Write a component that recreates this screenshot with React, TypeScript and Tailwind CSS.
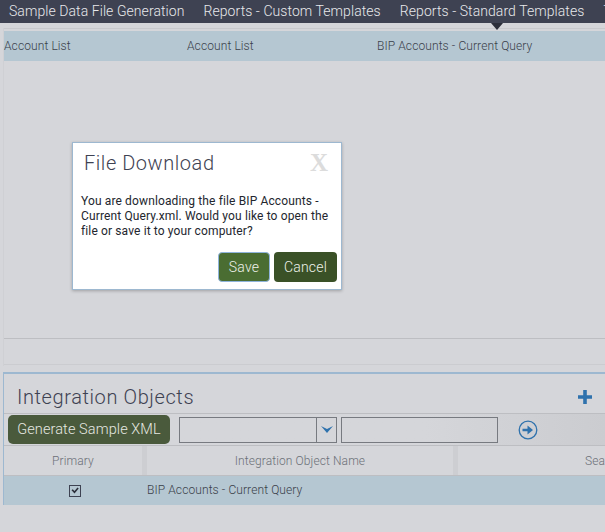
import { FC } from 'react'

const tabs = ['Sample Data File Generation', 'Reports - Custom Templates', 'Reports - Standard Templates', 'Test']

const App: FC = () => {
	return (
		<div className="relative h-[532px] w-[605px] overflow-hidden bg-[#d5d6da] font-['Roboto',sans-serif] font-light text-[#30343f]">
			<div className="relative flex h-[23px] items-center gap-[19px] overflow-hidden whitespace-nowrap bg-[#3e4252] pl-[9px] text-[14px] tracking-[0.07px] text-[#e8e9ec]">
				{tabs.map((tab) => (
					<span key={tab} className="shrink-0">{tab}</span>
				))}
			</div>
			<div className="absolute left-[491px] top-[23px] h-0 w-0 border-x-[6px] border-t-[7px] border-x-transparent border-t-[#2b2e3a]" />

			<div className="ml-[3px] mt-[5px] h-[338px] border-l border-[#cfd0d4]">
				<div className="h-[3px] border-t border-[#c8c9cd]" />
				<div className="flex h-[30px] items-center bg-[#b5c7d2] text-[12px] tracking-[0.1px] text-[#3a3f4a]">
					<span className="w-[183px]">Account List</span>
					<span className="w-[190px]">Account List</span>
					<span>BIP Accounts - Current Query</span>
				</div>
				<div className="h-[278px] border-b border-[#bdbec2]" />
				<div className="h-[26px] border-b border-[#cbccd0]" />
			</div>

			<div className="ml-[3px] mt-[6px] border-l border-t-2 border-[#9db8d0]">
				<div className="flex h-[39px] items-center justify-between pl-[13px] pr-[12px] pt-[6px]">
					<span className="text-[20px] tracking-[0.6px] text-[#3e4252]">Integration Objects</span>
					<svg width="16" height="16" viewBox="0 0 16 16" className="text-[#2f72ad]">
						<path d="M6.2 1h3.6v5.2H15v3.6H9.8V15H6.2V9.8H1V6.2h5.2z" fill="currentColor" />
					</svg>
				</div>
				<div className="flex h-[33px] items-center border-y border-[#bdbec2] bg-gradient-to-r from-[#d5d6da] from-70% to-[#cbccd0]">
					<button className="ml-[4px] h-[29px] w-[162px] rounded-[5px] bg-[#4a5a3c] text-[14.5px] tracking-[0.1px] text-[#e6e8e2]">Generate Sample XML</button>
					<div className="ml-[9px] flex h-[26px] w-[158px] border border-[#777a80]">
						<div className="flex-1" />
						<div className="flex w-[20px] items-center justify-center border-l border-[#777a80]">
							<svg width="12" height="7" viewBox="0 0 12 7" className="text-[#2f72ad]">
								<path d="M0 0l6 3 6-3-6 7z" fill="currentColor" />
							</svg>
						</div>
					</div>
					<div className="ml-[4px] h-[26px] w-[157px] border border-[#777a80]" />
					<svg width="20" height="20" viewBox="0 0 20 20" className="ml-[20px] text-[#2f72ad]">
						<circle cx="10" cy="10" r="8.8" fill="none" stroke="currentColor" strokeWidth="1.3" />
						<path d="M4.5 8.7h5V5.5L15 10l-5.5 4.5v-3.2h-5z" fill="currentColor" />
					</svg>
				</div>
				<div className="flex h-[30px] items-center whitespace-nowrap border-b border-[#bdbec2] text-[12px] tracking-[0.1px] text-[#6c7078]">
					<span className="w-[138px] shrink-0 text-center">Primary</span>
					<span className="h-full w-[5px] shrink-0 bg-[#cdced2]" />
					<span className="w-[306px] shrink-0 text-center">Integration Object Name</span>
					<span className="h-full w-[5px] shrink-0 bg-[#cdced2]" />
					<span className="ml-[127px] shrink-0">Search</span>
				</div>
				<div className="flex h-[29px] items-center bg-[#b5c7d2] text-[12px] tracking-[0.1px] text-[#3a3f4a]">
					<span className="flex w-[143px] justify-center pr-[2px]">
						<svg width="12" height="12" viewBox="0 0 12 12">
							<rect x="0.5" y="0.5" width="11" height="11" fill="none" stroke="#3e4252" />
							<path d="M2.5 5.2l1.2-1 1.8 1.9 3-3.6 1.2 1-4.2 5z" fill="#2b2e3a" />
						</svg>
					</span>
					<span className="mb-[1px]">BIP Accounts - Current Query</span>
				</div>
			</div>

			<div className="absolute left-[72px] top-[142px] h-[148px] w-[270px] border border-[#9db8d0] bg-white shadow-[0_1px_3px_rgba(0,0,0,0.25)]">
				<div className="flex items-start justify-between pl-[11px] pr-[13px] pt-[7px]">
					<span className="text-[20px] leading-[26px] tracking-[0.55px] text-[#3e4252]">File Download</span>
					<span className="font-['Liberation_Serif',serif] text-[25px] font-bold leading-[26px] text-[#dcdcdc]">X</span>
				</div>
				<p className="mx-[8px] mt-[18px] text-[12px] font-normal leading-[15px] tracking-[0.13px] text-[#23262e]">
					You are downloading the file BIP Accounts - Current Query.xml. Would you like to open the file or save it to your computer?
				</p>
				<div className="mt-[13px] flex justify-end gap-[4px] pr-[4px]">
					<button className="h-[30px] w-[52px] rounded-[4px] border border-[#8fb4dc] bg-[#4a6d32] text-[14px] tracking-[0.2px] text-[#eef1ea]">Save</button>
					<button className="h-[30px] w-[63px] rounded-[4px] bg-[#3a5127] text-[14px] tracking-[0.2px] text-[#eef1ea]">Cancel</button>
				</div>
			</div>
		</div>
	)
}

export default App
